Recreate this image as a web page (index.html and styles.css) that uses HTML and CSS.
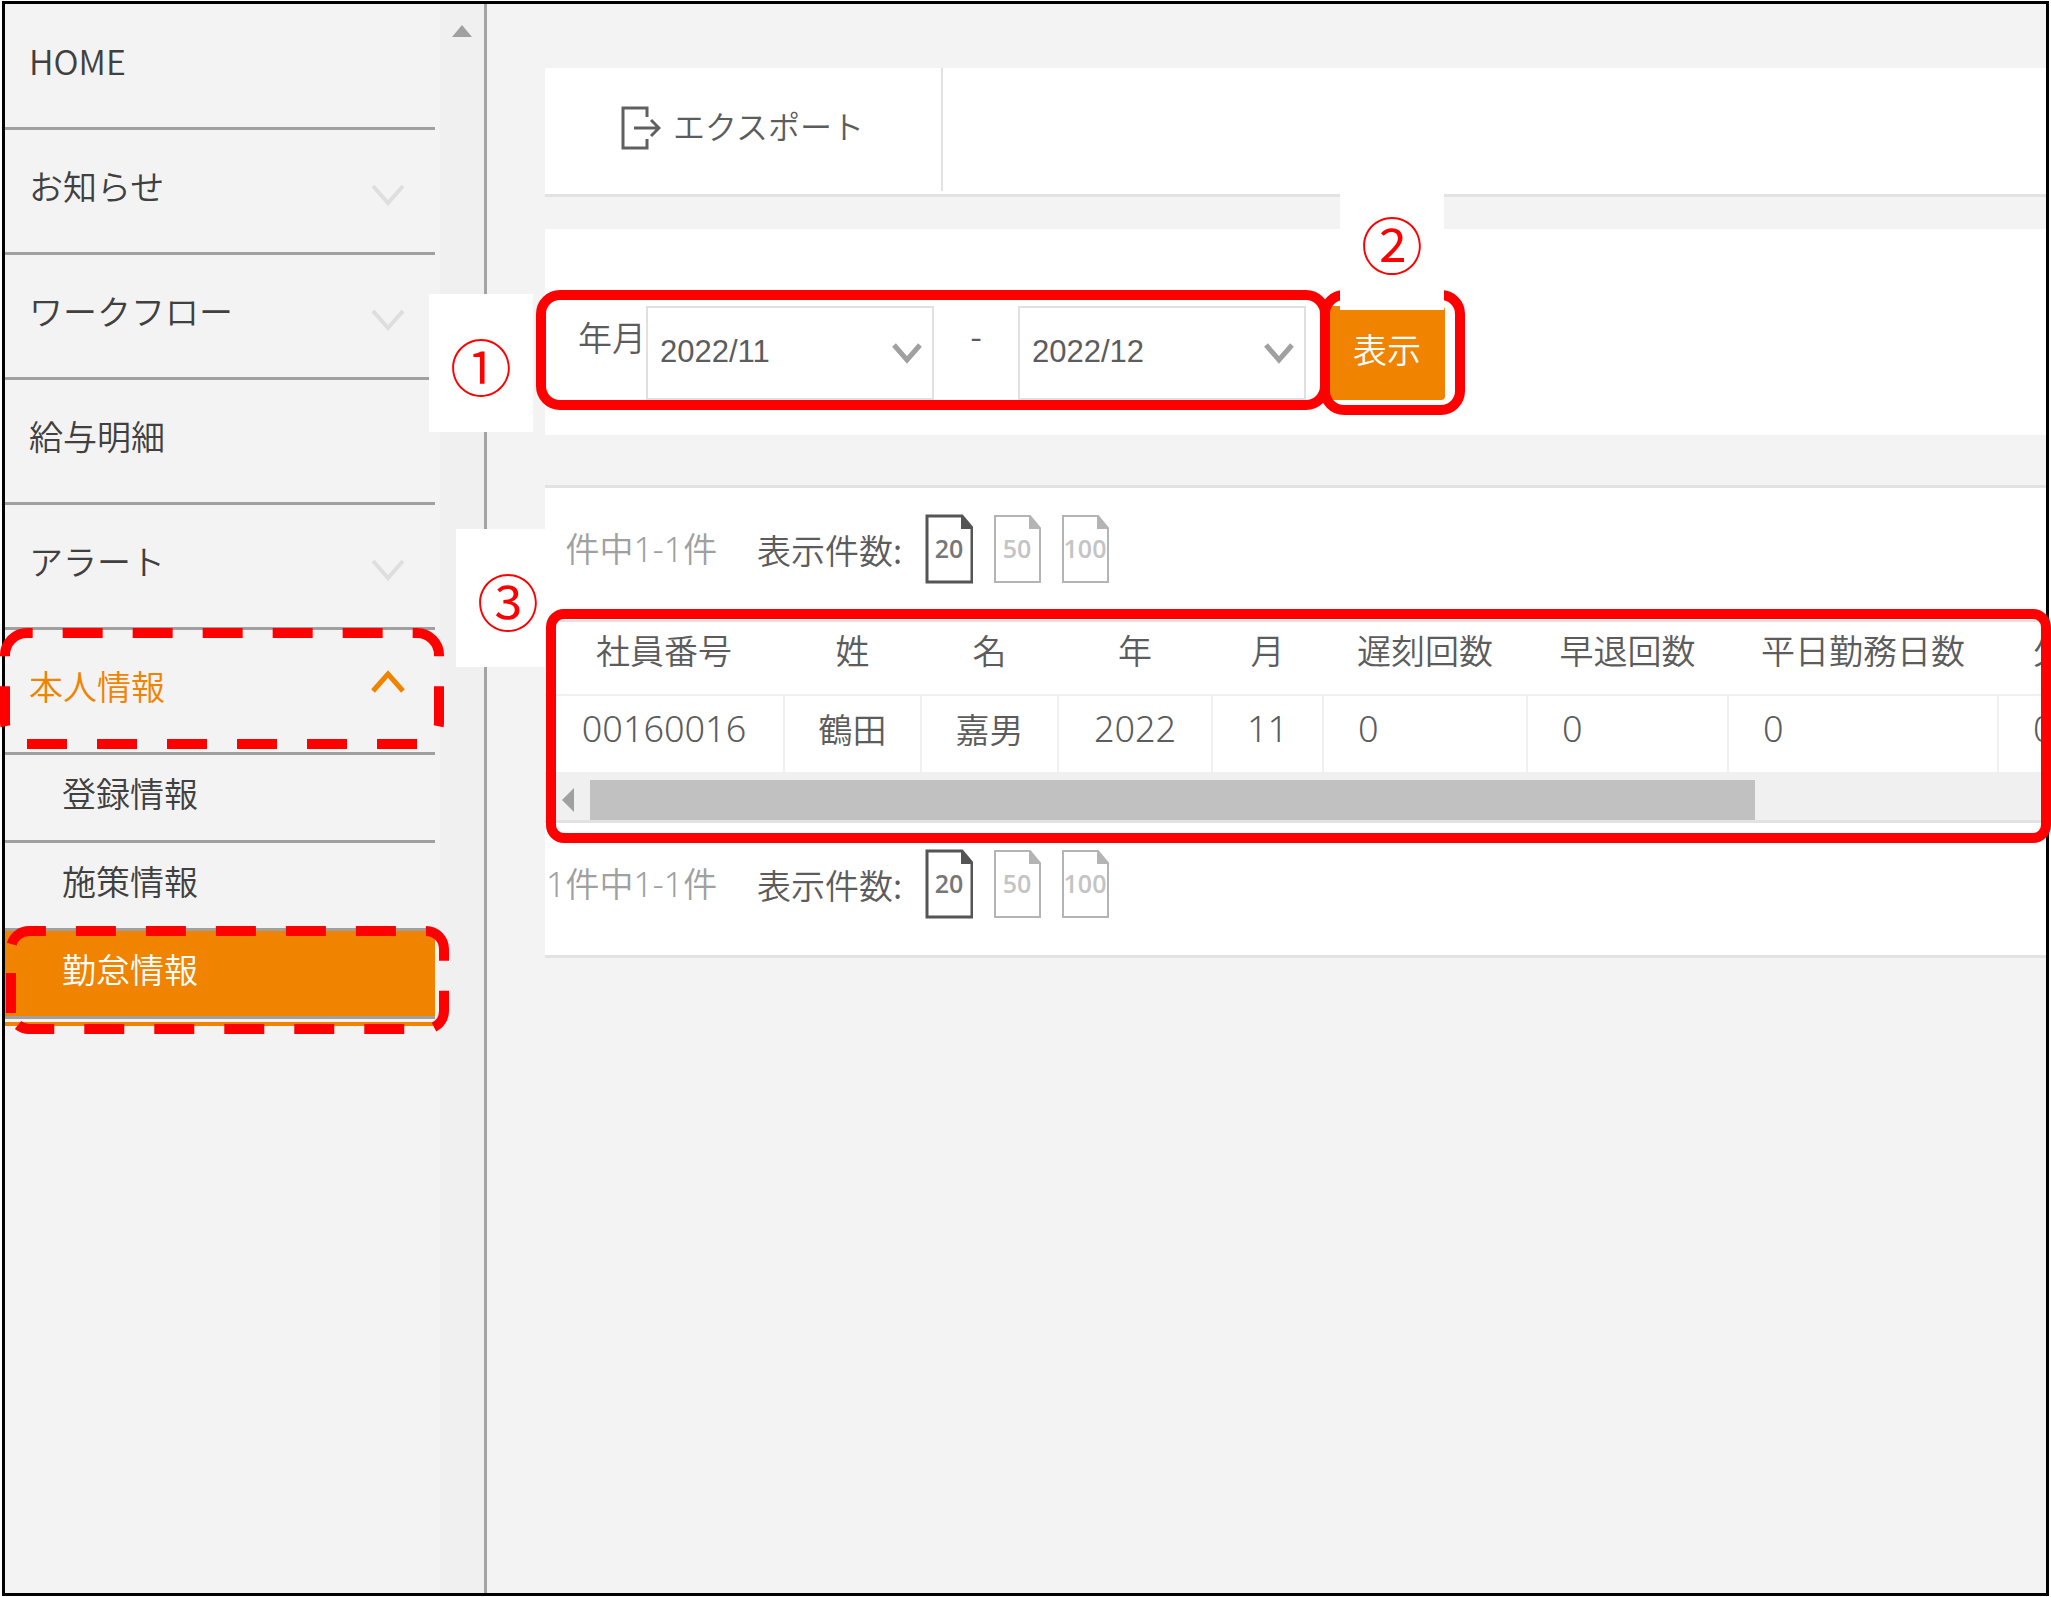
FILE: index.html
```html
<!DOCTYPE html>
<html lang="ja">
<head>
<meta charset="utf-8">
<title>勤怠情報</title>
<meta name="viewport" content="width=device-width, initial-scale=1">
<link rel="stylesheet" href="styles.css">
</head>
<body>
<div class="app">
  <aside class="sidebar">
    <nav class="menu">
      <a class="menu-item" href="#">HOME</a>
      <a class="menu-item" href="#">お知らせ
        <svg class="chevron" viewBox="0 0 34 24"><path d="M2 3 L17 20 L32 3"/></svg></a>
      <a class="menu-item" href="#">ワークフロー
        <svg class="chevron" viewBox="0 0 34 24"><path d="M2 3 L17 20 L32 3"/></svg></a>
      <a class="menu-item" href="#">給与明細</a>
      <a class="menu-item" href="#">アラート
        <svg class="chevron" viewBox="0 0 34 24"><path d="M2 3 L17 20 L32 3"/></svg></a>
      <a class="menu-item menu-open" href="#">本人情報
        <svg class="chevron" viewBox="0 0 34 24"><path d="M2 21 L17 4 L32 21"/></svg></a>
      <a class="menu-item menu-sub" href="#">登録情報</a>
      <a class="menu-item menu-sub" href="#">施策情報</a>
      <a class="menu-item menu-sub menu-current" href="#">勤怠情報</a>
      <div class="menu-end"></div>
    </nav>
    <div class="side-track"><svg class="arrow-up" viewBox="0 0 20 12"><path d="M10 0 L20 12 H0 Z"/></svg></div>
  </aside>

  <main class="main">
    <section class="panel toolbar">
      <button class="export" type="button">
        <svg class="export-icon" viewBox="0 0 40 44"><path d="M26 11 V2 H2 V42 H26 V33 M13 22 H38 M30 14 L38 22 L30 30"/></svg>
        エクスポート
      </button>
    </section>

    <form class="panel filter">
      <label class="filter-label" for="from">年月</label>
      <div class="select-box">
        <select id="from"><option>2022/11</option></select>
        <svg class="select-arrow" viewBox="0 0 30 22"><path d="M2 3 L15 18 L28 3"/></svg>
      </div>
      <label class="filter-dash" for="to">-</label>
      <div class="select-box">
        <select id="to"><option>2022/12</option></select>
        <svg class="select-arrow" viewBox="0 0 30 22"><path d="M2 3 L15 18 L28 3"/></svg>
      </div>
      <button class="show" type="button">表示</button>
    </form>

    <section class="panel results">
      <div class="pager">
        <span class="pager-range">1件中1-1件</span>
        <span class="pager-label">表示件数:</span>
        <button class="size size-on" type="button"><svg viewBox="0 0 48 70"><path class="sheet" d="M2 2 H37 L47 14 V68 H2 Z"/><path class="fold" d="M36 1 L48 15 H36 Z"/></svg><span>20</span></button>
        <button class="size" type="button"><svg viewBox="0 0 48 70"><path class="sheet" d="M2 2 H37 L47 14 V68 H2 Z"/><path class="fold" d="M36 1 L48 15 H36 Z"/></svg><span>50</span></button>
        <button class="size" type="button"><svg viewBox="0 0 48 70"><path class="sheet" d="M2 2 H37 L47 14 V68 H2 Z"/><path class="fold" d="M36 1 L48 15 H36 Z"/></svg><span>100</span></button>
      </div>
      <div class="table-box">
        <table>
          <colgroup><col class="c-id"><col class="c-name"><col class="c-name"><col class="c-year"><col class="c-month"><col class="c-late"><col class="c-early"><col class="c-days"><col class="c-absent"></colgroup>
          <thead>
            <tr><th>社員番号</th><th>姓</th><th>名</th><th>年</th><th>月</th><th>遅刻回数</th><th>早退回数</th><th>平日勤務日数</th><th>欠勤日数</th></tr>
          </thead>
          <tbody>
            <tr><td class="digits">00160016</td><td>鶴田</td><td>嘉男</td><td class="digits">2022</td><td class="digits">11</td><td class="digits num">0</td><td class="digits num">0</td><td class="digits num">0</td><td class="digits num">0</td></tr>
          </tbody>
        </table>
        <div class="table-track">
          <svg class="arrow-left" viewBox="0 0 12 24"><path d="M0 12 L12 0 V24 Z"/></svg>
          <div class="table-thumb"></div>
        </div>
      </div>
      <div class="pager">
        <span class="pager-range">1件中1-1件</span>
        <span class="pager-label">表示件数:</span>
        <button class="size size-on" type="button"><svg viewBox="0 0 48 70"><path class="sheet" d="M2 2 H37 L47 14 V68 H2 Z"/><path class="fold" d="M36 1 L48 15 H36 Z"/></svg><span>20</span></button>
        <button class="size" type="button"><svg viewBox="0 0 48 70"><path class="sheet" d="M2 2 H37 L47 14 V68 H2 Z"/><path class="fold" d="M36 1 L48 15 H36 Z"/></svg><span>50</span></button>
        <button class="size" type="button"><svg viewBox="0 0 48 70"><path class="sheet" d="M2 2 H37 L47 14 V68 H2 Z"/><path class="fold" d="M36 1 L48 15 H36 Z"/></svg><span>100</span></button>
      </div>
    </section>
  </main>

  <svg class="dashes dashes-parent" viewBox="0 0 444 121"><path d="M5 27 A22 22 0 0 1 27 5 H417 A22 22 0 0 1 439 27 V94 A22 22 0 0 1 417 116 H27 A22 22 0 0 1 5 94 Z"/></svg>
  <svg class="dashes dashes-current" viewBox="0 0 444 108"><path stroke-dashoffset="-5" d="M5 23 A18 18 0 0 1 23 5 H420 A18 18 0 0 1 438 23 V85 A18 18 0 0 1 420 103 H23 A18 18 0 0 1 12 99"/><path d="M5 87 V47"/></svg>
  <div class="mark mark-range"></div>
  <div class="mark mark-show"></div>
  <span class="step step-1">①</span>
  <span class="step step-2">②</span>
  <span class="step step-3">③</span>
  <div class="mark mark-table"></div>
</div>
</body>
</html>
```
FILE: styles.css
```css
* { box-sizing: border-box; }

body {
  margin: 0;
  background: #fff;
  color: #5c5c5c;
  font-family: "Noto Sans CJK JP", sans-serif;
  font-size: 34px;
  font-weight: 350;
  line-height: 50px;
}

button, select {
  margin: 0;
  padding: 0;
  border: 0;
  background: none;
  color: inherit;
  font: inherit;
}

svg { display: block; fill: none; }

.app {
  position: relative;
  display: grid;
  grid-template-columns: 482px minmax(0, 1fr);
  min-height: calc(100vh - 2px);
  margin: 1px 2px;
  border: 3px solid #000;
  background: #f3f3f3;
}

/* Sidebar */
.sidebar {
  display: flex;
  justify-content: space-between;
  border-right: 3px solid #a3a3a3;
}

.menu { width: 430px; padding-top: 1px; }

.menu-item {
  display: flex;
  align-items: center;
  justify-content: space-between;
  height: 125px;
  padding: 0 30px 10px 24px;
  border-bottom: 3px solid #a0a0a0;
  color: #404040;
  text-decoration: none;
}

.chevron {
  width: 34px;
  height: 24px;
  margin-top: 18px;
  stroke: #dedede;
  stroke-width: 4;
}

.menu-item.menu-open { color: #f08300; }
.menu-open .chevron { margin: 0 0 8px; stroke: #f08300; stroke-width: 5; }
.menu-sub { height: 88px; padding-left: 57px; }
.menu-item.menu-current { background: #f08300; color: #fff; }
.menu-end { height: 4px; margin-top: 3px; background: #f08300; }

.side-track { width: 44px; padding: 21px 12px; background: #f0f0f0; }
.arrow-up { width: 20px; height: 12px; fill: #a0a0a0; }

/* Content */
.main { padding: 64px 0 0 58px; overflow: hidden; }
.panel { background: #fff; }

.toolbar { margin-bottom: 32px; border-bottom: 3px solid #e2e2e2; }

.export {
  display: flex;
  align-items: center;
  gap: 12px;
  width: 398px;
  height: 123px;
  margin-bottom: 3px;
  padding: 0 0 9px 76px;
  border-right: 2px solid #e2e2e2;
  font-size: 32px;
}

.export-icon { width: 40px; height: 44px; margin-top: 6px; stroke: #606060; stroke-width: 3; }

.filter {
  display: flex;
  align-items: flex-start;
  height: 206px;
  margin-bottom: 50px;
  padding: 77px 0 0 33px;
}

.filter-label { width: 68px; padding-top: 6px; }
.filter-dash { width: 84px; padding-top: 4px; text-align: center; }
.select-box { position: relative; }

.select-box select {
  appearance: none;
  width: 288px;
  height: 94px;
  padding: 0 12px 2px;
  border: 2px solid #e0e0e0;
  border-radius: 0;
  font-family: "Liberation Sans", sans-serif;
  font-size: 31px;
}

.select-arrow {
  position: absolute;
  top: 36px;
  right: 12px;
  width: 30px;
  height: 22px;
  stroke: #a0a0a0;
  stroke-width: 5;
  pointer-events: none;
}

.show {
  width: 116px;
  height: 94px;
  margin-left: 23px;
  padding-bottom: 8px;
  border-radius: 4px;
  background: #f08300;
  color: #fff;
}

.results { border-top: 3px solid #e2e2e2; border-bottom: 3px solid #e2e2e2; }

.pager { display: flex; align-items: center; padding: 26px 0 36px 1px; }
.pager-range { width: 211px; color: #a0a0a0; font-family: "Noto Sans", "Noto Sans CJK JP", sans-serif; }
.pager-label { width: 168px; padding-top: 2px; }

.size {
  display: grid;
  place-items: center;
  margin-right: 20px;
  color: #c4c4c4;
  font-family: "Open Sans", sans-serif;
  font-size: 25px;
  font-weight: 600;
}

.size > * { grid-area: 1 / 1; }
.size span { padding-bottom: 2px; }
.size svg { width: 48px; height: 70px; }
.sheet { stroke: #b4b4b4; stroke-width: 2; }
.fold { fill: #b4b4b4; }
.size-on { color: #777; }
.size-on .sheet { stroke: #555; stroke-width: 3; }
.size-on .fold { fill: #555; }

.table-box { border-top: 2px solid #e2e2e2; border-bottom: 3px solid #e2e2e2; }

table { table-layout: fixed; width: 1660px; border-spacing: 0; }
.c-id { width: 240px; }
.c-name { width: 137px; }
.c-year { width: 154px; }
.c-month { width: 111px; }
.c-late { width: 204px; }
.c-early { width: 201px; }
.c-days { width: 270px; }
.c-absent { width: 206px; }

th {
  height: 74px;
  padding: 0 2px 16px 0;
  border-bottom: 2px solid #f0f0f0;
  font-weight: inherit;
}

td {
  height: 76px;
  padding: 0 0 10px;
  border-right: 2px solid #f0f0f0;
  text-align: center;
}

.digits { font-family: "Noto Sans", sans-serif; font-size: 36px; }
.num { padding-left: 34px; text-align: left; }

.table-track {
  display: flex;
  align-items: center;
  height: 48px;
  padding: 8px 0 0 17px;
  background: #f0f0f0;
}

.arrow-left { flex: none; width: 12px; height: 24px; fill: #a0a0a0; }
.table-thumb { width: 78.5%; height: 40px; margin-left: 16px; background: #c1c1c1; }

/* Step annotations laid over the screen */
.mark { position: absolute; border: 10px solid #f00; border-radius: 24px; pointer-events: none; }
.mark-range { left: 531px; top: 286px; width: 794px; height: 120px; }
.mark-show { left: 1315px; top: 286px; width: 145px; height: 125px; }
.mark-table { left: 541px; top: 605px; right: -5px; height: 234px; border-radius: 18px; }

.dashes { position: absolute; stroke: #f00; stroke-width: 10; stroke-dasharray: 40 30; pointer-events: none; }
.dashes-parent { left: -5px; top: 624px; width: 444px; height: 121px; }
.dashes-current { left: 1px; top: 922px; width: 444px; height: 108px; }

.step {
  position: absolute;
  display: grid;
  place-items: center;
  width: 104px;
  height: 138px;
  padding-top: 3px;
  background: #fff;
  color: #f00;
  font-size: 62px;
}

.step-1 { left: 424px; top: 290px; }
.step-2 { left: 1335px; top: 168px; }
.step-3 { left: 451px; top: 525px; }
```
